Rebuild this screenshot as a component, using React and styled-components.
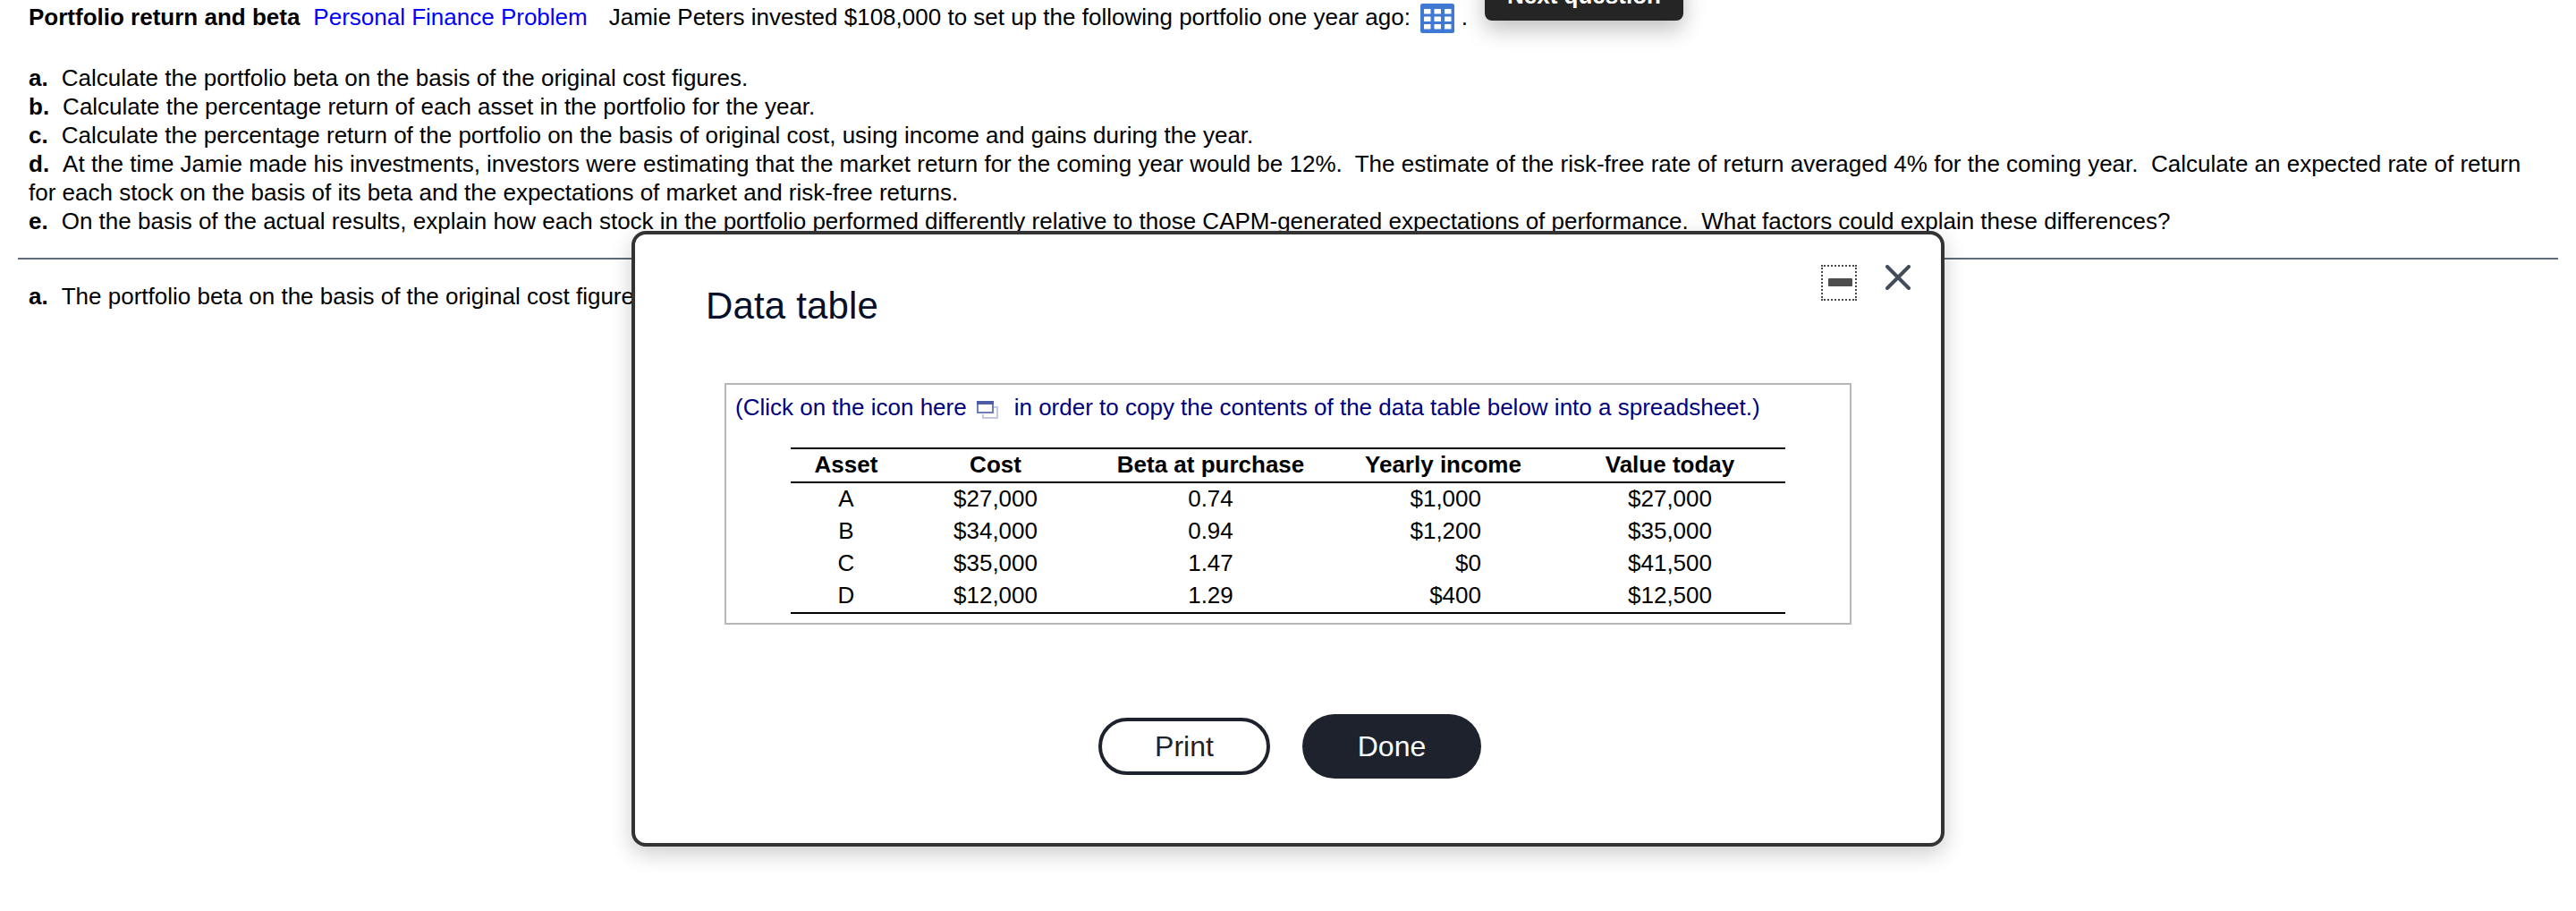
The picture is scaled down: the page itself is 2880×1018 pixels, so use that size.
import React from 'react'
import styled, { createGlobalStyle } from 'styled-components'

const rows = [
  { asset: 'A', cost: '$27,000', beta: '0.74', income: '$1,000', value: '$27,000' },
  { asset: 'B', cost: '$34,000', beta: '0.94', income: '$1,200', value: '$35,000' },
  { asset: 'C', cost: '$35,000', beta: '1.47', income: '$0', value: '$41,500' },
  { asset: 'D', cost: '$12,000', beta: '1.29', income: '$400', value: '$12,500' },
]

const GridIcon = () => (
  <TableIcon viewBox="0 0 38 33">
    <rect width="38" height="33" rx="2.5" fill="#4079d4" />
    {[6, 14.5, 23].map((y) =>
      [4, 15.5, 27].map((x) => (
        <rect key={`${x}-${y}`} x={x} y={y} width="7.5" height="5.5" rx="0.5" fill="#fff" />
      ))
    )}
  </TableIcon>
)

const CopyIcon = () => (
  <CopyMark viewBox="0 0 24 20">
    <path d="M18 7h5v12H7v-4" fill="none" stroke="#c3c7e4" strokeWidth="2" />
    <rect x="1" y="1" width="17" height="12" fill="#fff" stroke="#6f7cba" strokeWidth="2" />
    <rect width="19" height="4" fill="#4e5ca6" />
  </CopyMark>
)

const App = () => {
  return (
    <Page>
      <GlobalStyle />
      <Question>
        <Intro>
          <b>Portfolio return and beta</b>
          <Tag>Personal Finance Problem</Tag>
          <span>Jamie Peters invested $108,000 to set up the following portfolio one year ago:</span>
          <GridIcon />
          <span>.</span>
        </Intro>
        <Line><Letter>a.</Letter>Calculate the portfolio beta on the basis of the original cost figures.</Line>
        <Line><Letter>b.</Letter>Calculate the percentage return of each asset in the portfolio for the year.</Line>
        <Line><Letter>c.</Letter>Calculate the percentage return of the portfolio on the basis of original cost, using income and gains during the year.</Line>
        <Line>
          <Letter>d.</Letter>At the time Jamie made his investments, investors were estimating that the market return for the coming year would be 12%.&nbsp; The estimate of the risk-free rate of return averaged 4% for the coming year.&nbsp; Calculate an expected rate of return<br />
          for each stock on the basis of its beta and the expectations of market and risk-free returns.
        </Line>
        <Line><Letter>e.</Letter>On the basis of the actual results, explain how each stock in the portfolio performed differently relative to those CAPM-generated expectations of performance.&nbsp; What factors could explain these differences?</Line>
      </Question>
      <Divider />
      <Answer>
        <Line><Letter>a.</Letter>The portfolio beta on the basis of the original cost figure</Line>
      </Answer>

      <Tooltip>Next question</Tooltip>

      <Modal>
        <Header>
          <Title>Data table</Title>
          <Controls>
            <Minimize><Bar /></Minimize>
            <Close viewBox="0 0 28 28">
              <path d="M2 2l24 24M26 2L2 26" />
            </Close>
          </Controls>
        </Header>
        <Panel>
          <CopyHint>
            <span>(Click on the icon here</span>
            <CopyIcon />
            <span>in order to copy the contents of the data table below into a spreadsheet.)</span>
          </CopyHint>
          <Table>
            <colgroup>
              <Col $w={124} />
              <Col $w={210} />
              <Col $w={271} />
              <Col $w={249} />
              <Col $w={258} />
            </colgroup>
            <thead>
              <tr>
                <Th>Asset</Th>
                <Th>Cost</Th>
                <Th>Beta at purchase</Th>
                <Th>Yearly income</Th>
                <Th>Value today</Th>
              </tr>
            </thead>
            <tbody>
              {rows.map((row) => (
                <tr key={row.asset}>
                  <Td>{row.asset}</Td>
                  <Td>{row.cost}</Td>
                  <Td>{row.beta}</Td>
                  <Td $right>{row.income}</Td>
                  <Td>{row.value}</Td>
                </tr>
              ))}
            </tbody>
          </Table>
        </Panel>
        <Footer>
          <Print>Print</Print>
          <Done>Done</Done>
        </Footer>
      </Modal>
    </Page>
  )
}

export default App

const GlobalStyle = createGlobalStyle`
  * {
    box-sizing: border-box;
  }
  body {
    margin: 0;
    background: #fff;
  }
`

const Page = styled.div`
  position: relative;
  width: 2880px;
  height: 1018px;
  overflow: hidden;
  font-family: "Liberation Sans", Arial, sans-serif;
  font-size: 26px;
  line-height: 32px;
  color: #000;
`

const Question = styled.div`
  padding: 3px 32px 0;
`

const Intro = styled.div`
  display: flex;
  height: 68px;
  white-space: nowrap;
`

const Tag = styled.span`
  margin: 0 24px 0 15px;
  color: #0000ff;
`

const TableIcon = styled.svg`
  width: 38px;
  height: 33px;
  margin: 1px 8px 0 11px;
`

const Line = styled.div`
  white-space: nowrap;
`

const Letter = styled.b`
  margin-right: 15px;
`

const Divider = styled.div`
  height: 2px;
  margin: 25px 20px 0;
  background: #5f6b7a;
`

const Answer = styled.div`
  padding: 25px 32px 0;
`

const Tooltip = styled.div`
  position: absolute;
  top: -33px;
  left: 1660px;
  width: 222px;
  height: 56px;
  border-radius: 8px;
  background: #252525;
  box-shadow: 0 10px 24px rgba(0, 0, 0, 0.25);
  color: #fff;
  font-weight: bold;
  line-height: 56px;
  text-align: center;
`

const Modal = styled.div`
  position: absolute;
  top: 258px;
  left: 706px;
  width: 1468px;
  height: 688px;
  border: 4px solid #333;
  border-radius: 16px;
  background: #fff;
  box-shadow: 0 8px 24px rgba(0, 0, 0, 0.2);
`

const Header = styled.div`
  display: flex;
  justify-content: space-between;
  height: 166px;
  padding: 34px 34px 0 79px;
`

const Title = styled.div`
  margin-top: 22px;
  color: #05112a;
  font-size: 42px;
  letter-spacing: 0.15px;
  line-height: 47px;
`

const Controls = styled.div`
  display: flex;
  gap: 32px;
`

const Minimize = styled.div`
  width: 40px;
  height: 40px;
  padding: 13px 0 0 6px;
  border: 2px dotted #4a4a4a;
`

const Bar = styled.div`
  width: 27px;
  height: 9px;
  border-radius: 1px;
  background: #4d4d4d;
`

const Close = styled.svg`
  width: 28px;
  height: 28px;
  fill: none;
  stroke: #414d5b;
  stroke-width: 4;
  stroke-linecap: round;
`

const Panel = styled.div`
  width: 1260px;
  height: 270px;
  margin-left: 100px;
  padding: 9px 10px 0;
  border: 2px solid #b7b7b7;
`

const CopyHint = styled.div`
  display: flex;
  height: 61px;
  color: #000080;
  white-space: nowrap;
`

const CopyMark = styled.svg`
  width: 24px;
  height: 20px;
  margin: 9px 18px 0 11px;
`

const Table = styled.table`
  width: 1112px;
  margin-left: 62px;
  border-collapse: separate;
  border-spacing: 0;
  table-layout: fixed;
`

const Col = styled.col`
  width: ${({ $w }) => $w}px;
`

const Th = styled.th`
  height: 40px;
  padding: 0 0 2px;
  border-top: 2px solid #000;
  border-bottom: 2px solid #000;
  line-height: 30px;
  text-align: center;
`

const Td = styled.td`
  height: 36px;
  padding: 0 ${({ $right }) => ($right ? '82px' : '0')} 2px 0;
  text-align: ${({ $right }) => ($right ? 'right' : 'center')};

  tr:last-child > & {
    height: 38px;
    padding-bottom: 2px;
    border-bottom: 2px solid #000;
  }
`

const Footer = styled.div`
  display: flex;
  align-items: center;
  gap: 36px;
  margin: 100px 0 0 518px;
`

const Button = styled.div`
  display: flex;
  align-items: center;
  justify-content: center;
  border-radius: 36px;
  font-size: 32px;
`

const Print = styled(Button)`
  width: 192px;
  height: 64px;
  border: 4px solid #1e222d;
  color: #1e222d;
`

const Done = styled(Button)`
  width: 200px;
  height: 72px;
  background: #1e222d;
  color: #fff;
`
